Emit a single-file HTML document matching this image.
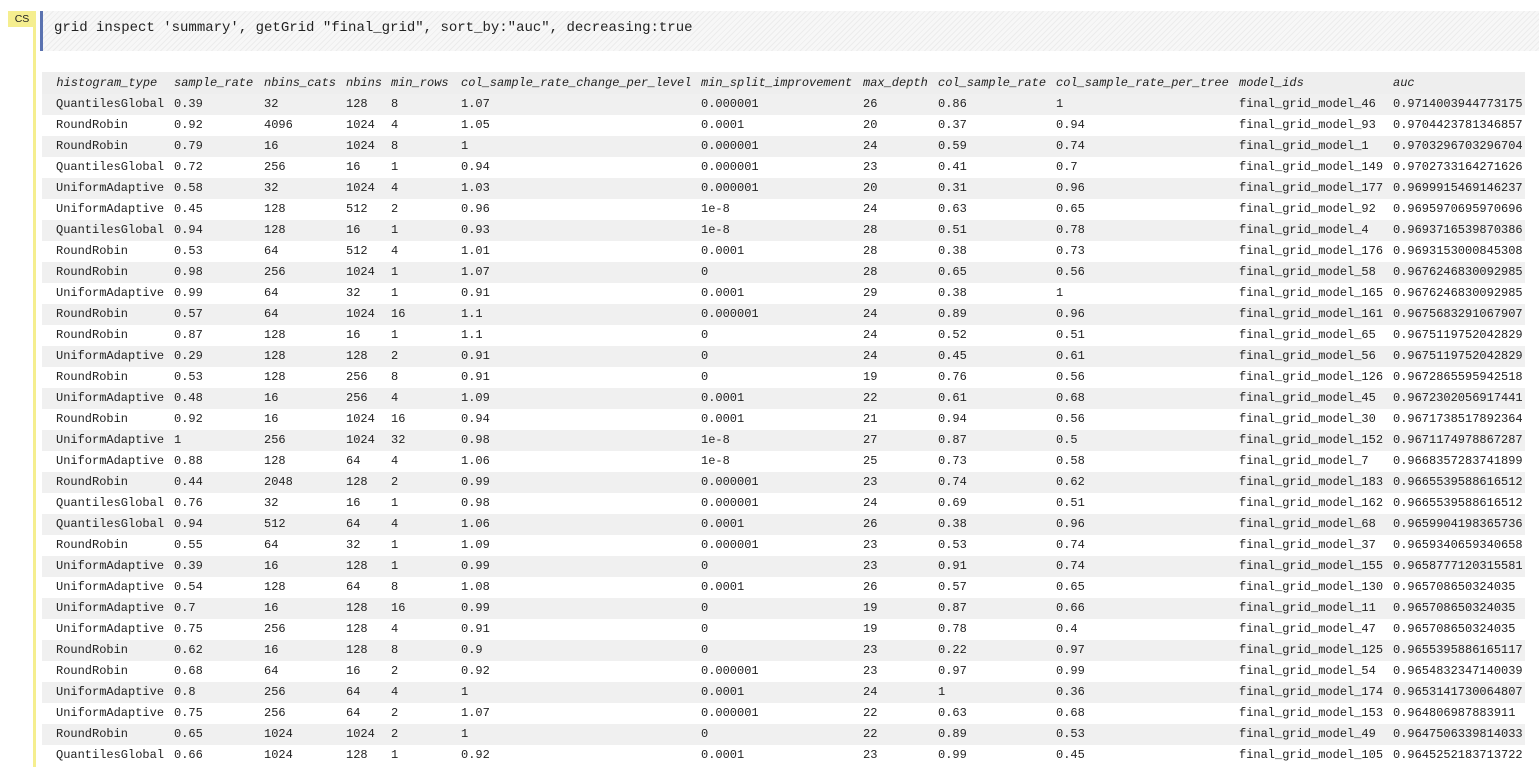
<!DOCTYPE html>
<html><head><meta charset="utf-8"><style>
html,body{margin:0;padding:0;background:#fff;width:1539px;height:767px;overflow:hidden;position:relative;font-family:"Liberation Mono",monospace;}
.badge{position:absolute;left:8px;top:11px;width:28px;height:16px;background:#f5ee8f;font:10.5px "Liberation Sans",sans-serif;line-height:16px;text-align:center;color:#222;font-weight:500;}
.bar{position:absolute;left:33px;top:27px;width:3px;height:740px;background:#f5ee8f;}
.code{position:absolute;left:40px;top:11px;width:1499px;height:40px;border-left:3px solid #5a72b0;box-sizing:border-box;
background:repeating-linear-gradient(135deg,#f7f7f7 0,#f7f7f7 3px,#ececec 3px,#ececec 4px);}
.code span{position:absolute;left:11px;top:9px;font-size:14px;color:#222;white-space:pre;}
table{position:absolute;left:42px;top:72px;border-collapse:collapse;table-layout:fixed;width:1483px;font-size:12px;color:#222;}
td,th{height:21px;padding:0;white-space:nowrap;text-align:left;overflow:hidden;line-height:21px;}
th{height:22px;font-weight:normal;font-style:italic;background:#eee;}
tr:nth-child(even) td{background:#f0f0f0;}
</style></head><body>
<div class="badge">CS</div><div class="bar"></div>
<div class="code"><span>grid inspect 'summary', getGrid "final_grid", sort_by:"auc", decreasing:true</span></div>
<table>
<colgroup><col style="width:132px"><col style="width:90px"><col style="width:82px"><col style="width:45px"><col style="width:70px"><col style="width:240px"><col style="width:162px"><col style="width:75px"><col style="width:118px"><col style="width:183px"><col style="width:154px"><col style="width:132px"></colgroup>
<tbody>
<tr><th>&nbsp;&nbsp;histogram_type</th><th>sample_rate</th><th>nbins_cats</th><th>nbins</th><th>min_rows</th><th>col_sample_rate_change_per_level</th><th>min_split_improvement</th><th>max_depth</th><th>col_sample_rate</th><th>col_sample_rate_per_tree</th><th>model_ids</th><th>auc</th></tr>
</tbody>
</table>
<script>
var d=`QuantilesGlobal 0.39 32 128 8 1.07 0.000001 26 0.86 1 final_grid_model_46 0.9714003944773175
RoundRobin 0.92 4096 1024 4 1.05 0.0001 20 0.37 0.94 final_grid_model_93 0.9704423781346857
RoundRobin 0.79 16 1024 8 1 0.000001 24 0.59 0.74 final_grid_model_1 0.9703296703296704
QuantilesGlobal 0.72 256 16 1 0.94 0.000001 23 0.41 0.7 final_grid_model_149 0.9702733164271626
UniformAdaptive 0.58 32 1024 4 1.03 0.000001 20 0.31 0.96 final_grid_model_177 0.9699915469146237
UniformAdaptive 0.45 128 512 2 0.96 1e-8 24 0.63 0.65 final_grid_model_92 0.9695970695970696
QuantilesGlobal 0.94 128 16 1 0.93 1e-8 28 0.51 0.78 final_grid_model_4 0.9693716539870386
RoundRobin 0.53 64 512 4 1.01 0.0001 28 0.38 0.73 final_grid_model_176 0.9693153000845308
RoundRobin 0.98 256 1024 1 1.07 0 28 0.65 0.56 final_grid_model_58 0.9676246830092985
UniformAdaptive 0.99 64 32 1 0.91 0.0001 29 0.38 1 final_grid_model_165 0.9676246830092985
RoundRobin 0.57 64 1024 16 1.1 0.000001 24 0.89 0.96 final_grid_model_161 0.9675683291067907
RoundRobin 0.87 128 16 1 1.1 0 24 0.52 0.51 final_grid_model_65 0.9675119752042829
UniformAdaptive 0.29 128 128 2 0.91 0 24 0.45 0.61 final_grid_model_56 0.9675119752042829
RoundRobin 0.53 128 256 8 0.91 0 19 0.76 0.56 final_grid_model_126 0.9672865595942518
UniformAdaptive 0.48 16 256 4 1.09 0.0001 22 0.61 0.68 final_grid_model_45 0.9672302056917441
RoundRobin 0.92 16 1024 16 0.94 0.0001 21 0.94 0.56 final_grid_model_30 0.9671738517892364
UniformAdaptive 1 256 1024 32 0.98 1e-8 27 0.87 0.5 final_grid_model_152 0.9671174978867287
UniformAdaptive 0.88 128 64 4 1.06 1e-8 25 0.73 0.58 final_grid_model_7 0.9668357283741899
RoundRobin 0.44 2048 128 2 0.99 0.000001 23 0.74 0.62 final_grid_model_183 0.9665539588616512
QuantilesGlobal 0.76 32 16 1 0.98 0.000001 24 0.69 0.51 final_grid_model_162 0.9665539588616512
QuantilesGlobal 0.94 512 64 4 1.06 0.0001 26 0.38 0.96 final_grid_model_68 0.9659904198365736
RoundRobin 0.55 64 32 1 1.09 0.000001 23 0.53 0.74 final_grid_model_37 0.9659340659340658
UniformAdaptive 0.39 16 128 1 0.99 0 23 0.91 0.74 final_grid_model_155 0.9658777120315581
UniformAdaptive 0.54 128 64 8 1.08 0.0001 26 0.57 0.65 final_grid_model_130 0.965708650324035
UniformAdaptive 0.7 16 128 16 0.99 0 19 0.87 0.66 final_grid_model_11 0.965708650324035
UniformAdaptive 0.75 256 128 4 0.91 0 19 0.78 0.4 final_grid_model_47 0.965708650324035
RoundRobin 0.62 16 128 8 0.9 0 23 0.22 0.97 final_grid_model_125 0.9655395886165117
RoundRobin 0.68 64 16 2 0.92 0.000001 23 0.97 0.99 final_grid_model_54 0.9654832347140039
UniformAdaptive 0.8 256 64 4 1 0.0001 24 1 0.36 final_grid_model_174 0.9653141730064807
UniformAdaptive 0.75 256 64 2 1.07 0.000001 22 0.63 0.68 final_grid_model_153 0.964806987883911
RoundRobin 0.65 1024 1024 2 1 0 22 0.89 0.53 final_grid_model_49 0.9647506339814033
QuantilesGlobal 0.66 1024 128 1 0.92 0.0001 23 0.99 0.45 final_grid_model_105 0.9645252183713722`;
var tb=document.querySelector('tbody');
d.split('\n').forEach(function(l){var tr=document.createElement('tr');l.split(' ').forEach(function(c,i){var td=document.createElement('td');td.textContent=c;if(i==0)td.style.paddingLeft='14px';tr.appendChild(td);});tb.appendChild(tr);});
</script>
</body></html>
